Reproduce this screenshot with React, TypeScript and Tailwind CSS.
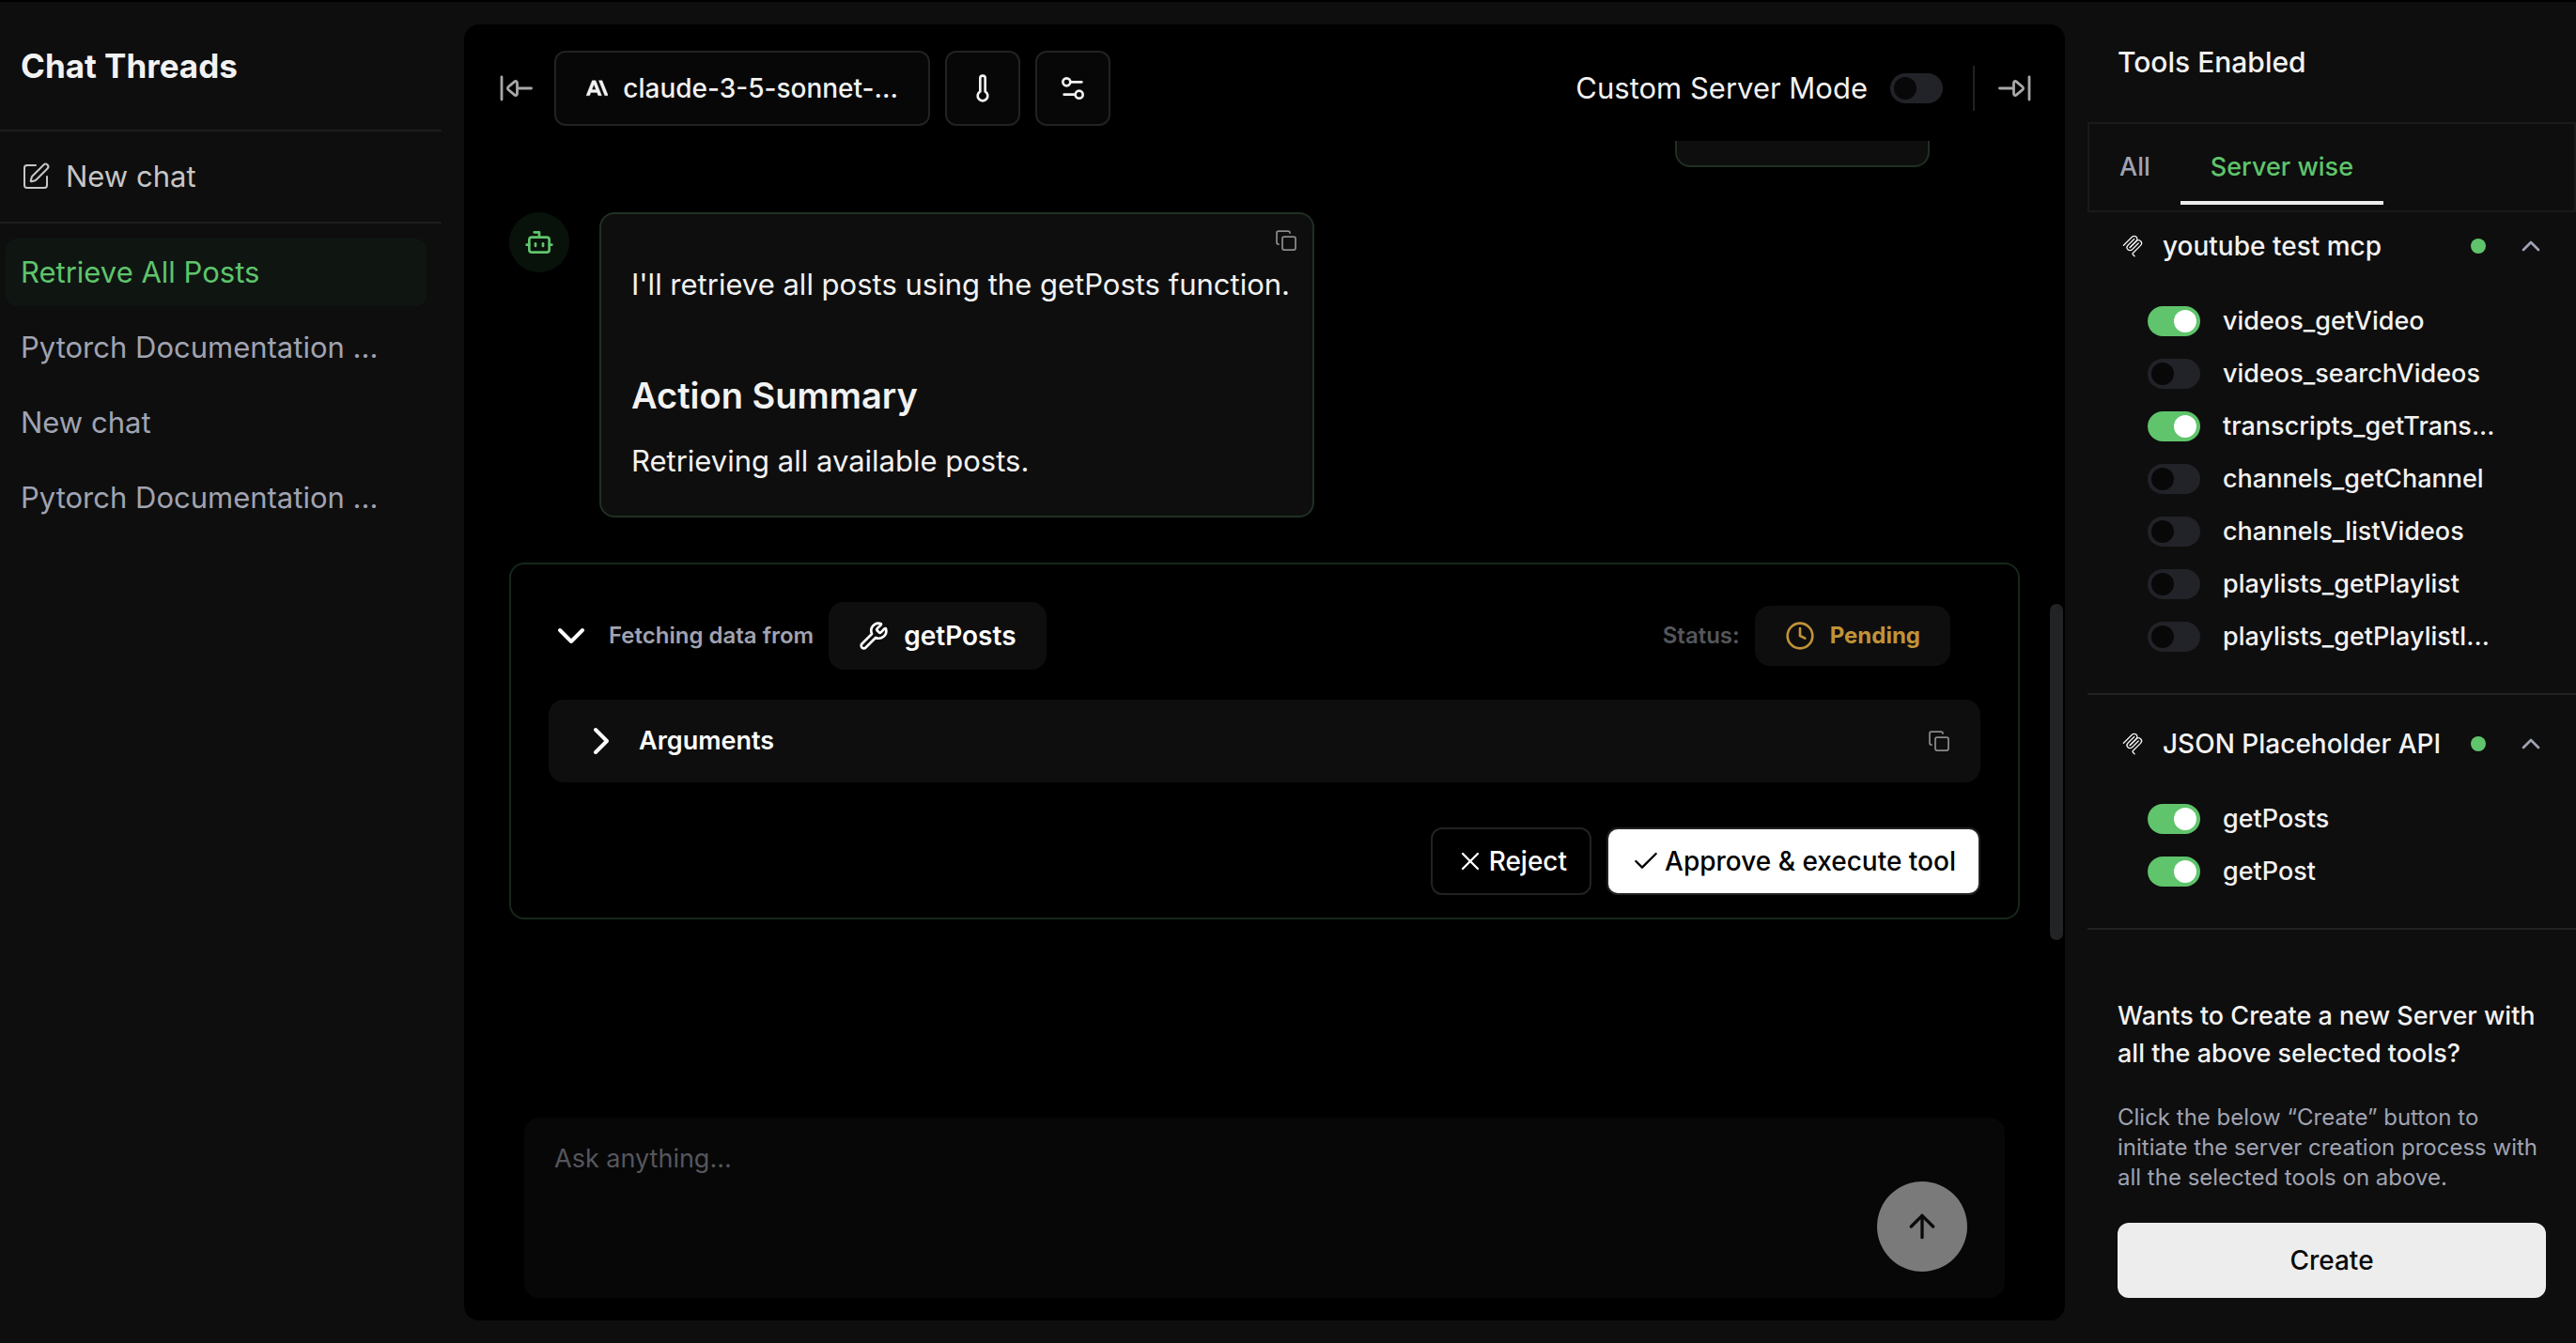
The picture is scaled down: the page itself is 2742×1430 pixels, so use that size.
import React, { useState } from "react";
import {
  ArrowUp,
  Bot,
  Check,
  ChevronDown,
  ChevronRight,
  ChevronUp,
  Clock,
  Copy,
  Settings2,
  SquarePen,
  Thermometer,
  Wrench,
  X,
} from "lucide-react";

const threads = [
  "Retrieve All Posts",
  "Pytorch Documentation ...",
  "New chat",
  "Pytorch Documentation ...",
];

const servers = [
  {
    name: "youtube test mcp",
    tools: [
      { name: "videos_getVideo", enabled: true },
      { name: "videos_searchVideos", enabled: false },
      { name: "transcripts_getTrans...", enabled: true },
      { name: "channels_getChannel", enabled: false },
      { name: "channels_listVideos", enabled: false },
      { name: "playlists_getPlaylist", enabled: false },
      { name: "playlists_getPlaylistI...", enabled: false },
    ],
  },
  {
    name: "JSON Placeholder API",
    tools: [
      { name: "getPosts", enabled: true },
      { name: "getPost", enabled: true },
    ],
  },
];

const CollapseIcon = ({ className = "" }: { className?: string }) => (
  <svg
    viewBox="0 0 36 36"
    fill="none"
    stroke="currentColor"
    strokeWidth="2.8"
    strokeLinecap="round"
    strokeLinejoin="round"
    className={`size-9 ${className}`}
  >
    <path d="M2 6v24" />
    <path d="M33.5 18H20" />
    <path d="M18.5 12.5v11c0 2-1.6 2.6-3 1.4l-6.4-5.4a2 2 0 0 1 0-3l6.4-5.4c1.4-1.2 3-.6 3 1.4Z" />
  </svg>
);

const AnthropicLogo = () => (
  <svg
    viewBox="0 0 24 24"
    fill="currentColor"
    stroke="currentColor"
    strokeWidth="0.4"
    className="size-6"
  >
    <path d="M13.827 3.52h3.603L24 20h-3.603l-6.57-16.48zm-7.258 0h3.767L16.906 20h-3.674l-1.343-3.461H5.017l-1.344 3.46H0L6.57 3.522zm4.132 9.959L8.453 7.687 6.205 13.48H10.7z" />
  </svg>
);

const McpIcon = () => (
  <svg
    viewBox="0 0 180 180"
    fill="none"
    stroke="currentColor"
    strokeWidth="10"
    strokeLinecap="round"
    className="size-6"
  >
    <path d="M18 84.85 85.88 16.97c9.37-9.37 24.57-9.37 33.94 0 9.38 9.37 9.38 24.57 0 33.94L68.56 102.18" />
    <path d="m69.27 101.47 50.55-50.56c9.38-9.37 24.57-9.37 33.95 0l.35.36c9.37 9.37 9.37 24.56 0 33.94L92.72 146.6c-3.12 3.12-3.12 8.19 0 11.31l12.61 12.61" />
    <path d="M102.85 33.94 52.65 84.15c-9.37 9.37-9.37 24.56 0 33.94 9.37 9.37 24.57 9.37 33.94 0l50.2-50.21" />
  </svg>
);

const Switch = ({
  id,
  defaultChecked = false,
}: {
  id: string;
  defaultChecked?: boolean;
}) => (
  <input
    id={id}
    type="checkbox"
    role="switch"
    defaultChecked={defaultChecked}
    className="h-8 w-14 shrink-0 cursor-pointer appearance-none rounded-full bg-[#222328] p-1 before:block before:size-6 before:rounded-full before:bg-[#080808] checked:bg-[#5fc46b] checked:before:translate-x-6 checked:before:bg-white"
  />
);

const ThreadsSidebar = () => {
  const [active, setActive] = useState(0);
  return (
    <aside className="w-[470px] shrink-0">
      <h2 className="flex h-34 items-center px-[22px] text-[35px] font-bold">
        Chat Threads
      </h2>
      <button className="flex h-25 w-full items-center gap-4 border-y-2 border-[#1d1d1d] px-[22px] text-[31px] text-[#c6c6c6]">
        <SquarePen className="size-8" strokeWidth={1.5} />
        New chat
      </button>
      <nav className="flex flex-col gap-2 py-4 pl-1.5 pr-4">
        {threads.map((thread, i) => (
          <button
            key={i}
            onClick={() => setActive(i)}
            className={`h-18 rounded-xl px-4 text-left text-[31px] ${
              i === active ? "bg-[#0f1612] text-[#5fc46b]" : "text-[#a0a3b1]"
            }`}
          >
            {thread}
          </button>
        ))}
      </nav>
    </aside>
  );
};

const ChatHeader = () => (
  <header className="flex h-31 shrink-0 items-center justify-between pl-[38px] pr-9 pt-3">
    <div className="flex items-center gap-4">
      <button aria-label="Collapse threads" className="mr-1.5 text-[#a8a8a8]">
        <CollapseIcon />
      </button>
      <button className="flex h-20 w-[400px] items-center gap-4 whitespace-nowrap rounded-xl border-2 border-[#222] bg-[#070707] px-8 text-[28px] font-medium">
        <AnthropicLogo />
        claude-3-5-sonnet-...
      </button>
      <button
        aria-label="Temperature"
        className="flex size-20 items-center justify-center rounded-xl border-2 border-[#222] bg-[#070707]"
      >
        <Thermometer className="size-8" />
      </button>
      <button
        aria-label="Settings"
        className="flex size-20 items-center justify-center rounded-xl border-2 border-[#222] bg-[#070707]"
      >
        <Settings2 className="size-8" />
      </button>
    </div>
    <div className="flex items-center gap-6">
      <label htmlFor="custom-server" className="text-[31px]">
        Custom Server Mode
      </label>
      <Switch id="custom-server" />
      <span className="ml-2 h-12 w-0.5 bg-[#222]" />
      <button aria-label="Collapse tools" className="text-[#a8a8a8]">
        <CollapseIcon className="rotate-180" />
      </button>
    </div>
  </header>
);

const AssistantMessage = () => (
  <div className="mt-12 flex items-start gap-8">
    <div className="flex size-16 shrink-0 items-center justify-center rounded-full bg-[#09110b] text-[#5fc46b]">
      <Bot className="size-8" />
    </div>
    <div className="relative rounded-2xl border-2 border-[#1f3022] bg-[#0e0e0e] pb-8 pl-8 pr-6 pt-[49px]">
      <button
        aria-label="Copy message"
        className="absolute right-4 top-4 text-[#8a8a8a]"
      >
        <Copy className="size-6" strokeWidth={1.75} />
      </button>
      <p className="text-[31px] leading-[52px]">
        I'll retrieve all posts using the getPosts function.
      </p>
      <h3 className="mt-16 text-[38px] font-semibold leading-[56px]">
        Action Summary
      </h3>
      <p className="mt-4 text-[31px] leading-[52px]">
        Retrieving all available posts.
      </p>
    </div>
  </div>
);

const ToolCall = () => (
  <section className="mt-12 rounded-2xl border-2 border-[#15281a] px-10 pb-6 pt-10">
    <div className="flex items-center justify-between pr-8">
      <div className="flex items-center gap-4">
        <button
          aria-label="Toggle details"
          className="flex h-12 w-12 items-center justify-center text-white"
        >
          <ChevronDown className="size-12" />
        </button>
        <span className="text-2xl font-semibold text-[#a0a3b1]">
          Fetching data from
        </span>
        <span className="flex h-18 items-center gap-4 rounded-2xl bg-[#0e0e0e] px-8 text-[28px] font-semibold text-white">
          <Wrench className="size-8" />
          getPosts
        </span>
      </div>
      <div className="flex items-center gap-4">
        <span className="text-2xl font-semibold text-[#55565c]">Status:</span>
        <span className="flex h-16 items-center gap-4 rounded-2xl bg-[#0e0e0e] px-8 text-2xl font-bold text-[#c09338]">
          <Clock className="size-8" />
          Pending
        </span>
      </div>
    </div>
    <div className="mt-8 flex h-22 items-center justify-between rounded-2xl bg-[#0e0e0e] pl-8 pr-8">
      <button className="flex items-center gap-4 text-[27px] font-semibold text-white">
        <ChevronRight className="size-12" />
        Arguments
      </button>
      <button aria-label="Copy arguments" className="text-[#8a8a8a]">
        <Copy className="size-6" strokeWidth={1.75} />
      </button>
    </div>
    <div className="mt-12 flex justify-end gap-4">
      <button className="flex h-18 items-center gap-1 rounded-xl border-2 border-[#222] px-6 text-[28px] font-medium text-white">
        <X className="size-8" strokeWidth={1.75} />
        Reject
      </button>
      <button className="flex h-18 items-center gap-1 rounded-xl border-2 border-[#222] bg-white px-6 text-[28px] font-medium text-black">
        <Check className="size-8" strokeWidth={1.75} />
        Approve &amp; execute tool
      </button>
    </div>
  </section>
);

const ChatPanel = () => (
  <main className="my-6 ml-6 mr-6 flex min-w-0 flex-1 flex-col rounded-2xl bg-black">
    <ChatHeader />
    <div className="flex flex-1">
      <div className="flex-1 pl-12 pr-8">
        <div className="ml-auto mr-24 h-7 w-[271px] rounded-b-2xl border-2 border-t-0 border-[#1f3022] bg-[#0e0e0e]" />
        <AssistantMessage />
        <ToolCall />
      </div>
      <div className="mr-0.5 flex w-3.5 flex-col">
        <span className="grow-[493]" />
        <span className="grow-[358] rounded-full bg-[#222325]" />
        <span className="grow-[189]" />
      </div>
    </div>
    <form className="mx-16 mb-6 flex h-48 items-end rounded-2xl bg-[#070707] pr-10">
      <textarea
        aria-label="Ask anything"
        placeholder="Ask anything..."
        className="h-full flex-1 resize-none bg-transparent px-8 py-6 text-[27px] leading-10 outline-none placeholder:text-[#55565c]"
      />
      <button
        type="button"
        aria-label="Send"
        className="mb-7 flex size-24 items-center justify-center rounded-full bg-[#7a7a7a] text-[#0a0a0a]"
      >
        <ArrowUp className="size-10" />
      </button>
    </form>
  </main>
);

const ToolsSidebar = () => (
  <aside className="flex w-[520px] shrink-0 flex-col">
    <h2 className="flex h-32 items-center pl-8 text-[30px] font-medium">
      Tools Enabled
    </h2>
    <div className="flex h-24 items-end border-2 border-[#1a1a1a] pb-1.5 text-[27px] font-medium">
      <button className="h-20 border-b-4 border-transparent px-8 pt-1 text-[#a0a3b1]">
        All
      </button>
      <button className="h-20 border-b-4 border-[#ededed] px-8 pt-1 text-[#5fc46b]">
        Server wise
      </button>
    </div>
    {servers.map((server, i) => (
      <section
        key={server.name}
        className={`border-b-2 border-[#222] pb-11 pl-9 pr-8 ${
          i ? "pt-8" : "pt-4"
        }`}
      >
        <button className="flex h-10 w-full items-center gap-5 text-left text-[28px] font-medium">
          <McpIcon />
          <span className="flex-1 whitespace-nowrap">{server.name}</span>
          <span className="size-4 rounded-full bg-[#5fc46b]" />
          <ChevronUp className="ml-3 size-8 text-[#a0a3b1]" />
        </button>
        <ul className="mt-11 flex flex-col gap-6 pl-7">
          {server.tools.map((tool) => (
            <li key={tool.name} className="flex h-8 items-center gap-6">
              <Switch id={tool.name} defaultChecked={tool.enabled} />
              <label
                htmlFor={tool.name}
                className="whitespace-nowrap text-[27px] font-medium"
              >
                {tool.name}
              </label>
            </li>
          ))}
        </ul>
      </section>
    ))}
    <div className="mt-auto pb-12 pl-8 pr-8">
      <p className="text-[27px] font-medium leading-10">
        Wants to Create a new Server with
        <br />
        all the above selected tools?
      </p>
      <p className="mt-8 text-2xl leading-8 text-[#a0a3b1]">
        Click the below “Create” button to
        <br />
        initiate the server creation process with
        <br />
        all the selected tools on above.
      </p>
      <button className="mt-8 h-20 w-full rounded-xl bg-[#ededed] text-[28px] font-medium text-[#0a0a0a]">
        Create
      </button>
    </div>
  </aside>
);

export default function App() {
  return (
    <div className="flex min-h-screen border-t-2 border-black bg-[#0e0e0e] font-['Inter',sans-serif] text-[#f2f2f2]">
      <ThreadsSidebar />
      <ChatPanel />
      <ToolsSidebar />
    </div>
  );
}
